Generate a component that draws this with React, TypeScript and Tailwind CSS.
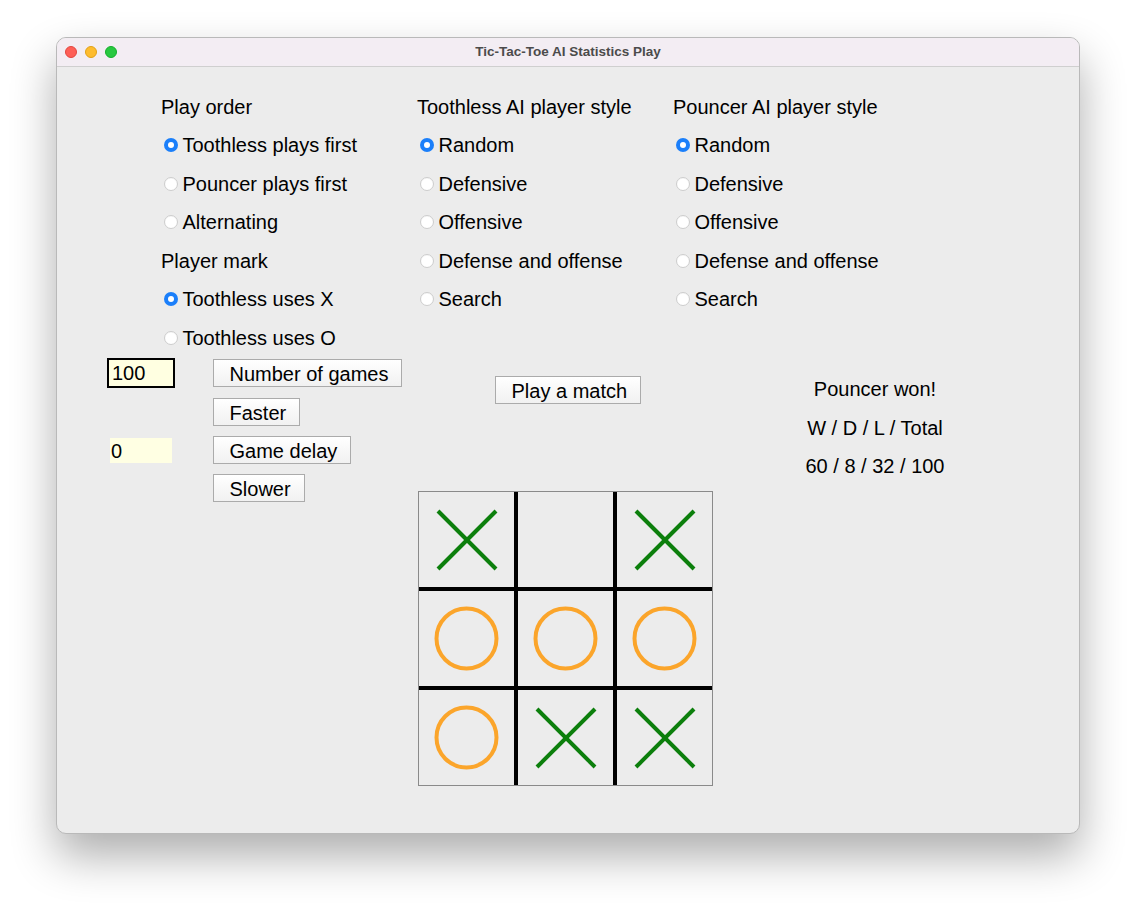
import React from "react";

const Radio = ({ checked }: { checked?: boolean }) =>
  checked ? (
    <span className="w-[14px] h-[14px] rounded-full bg-[#1b7ffa] flex items-center justify-center shrink-0">
      <span className="w-[6px] h-[6px] rounded-full bg-white" />
    </span>
  ) : (
    <span className="w-[14px] h-[14px] rounded-full bg-white border border-[#cdcdcd] shrink-0 shadow-[inset_0_0.5px_1px_rgba(0,0,0,0.06)]" />
  );

const Row = ({ children }: { children: React.ReactNode }) => (
  <div className="h-[38.5px] flex items-center">{children}</div>
);

const RadioRow = ({ label, checked }: { label: string; checked?: boolean }) => (
  <Row>
    <span className="ml-[3px] flex items-center">
      <Radio checked={checked} />
    </span>
    <span className="ml-[4.5px]">{label}</span>
  </Row>
);

const Btn = ({ label, w, className = "" }: { label: string; w: string; className?: string }) => (
  <div
    className={`h-[28px] ${w} border border-[#ababab] bg-gradient-to-b from-[#ffffff] to-[#f1f1f1] flex items-center pl-[15.5px] pt-[2px] leading-none ${className}`}
  >
    {label}
  </div>
);

const XMark = () => (
  <svg width="95" height="95" viewBox="0 0 95 95">
    <line x1="19" y1="19" x2="77" y2="77" stroke="#0c7f0c" strokeWidth="4" />
    <line x1="77" y1="19" x2="19" y2="77" stroke="#0c7f0c" strokeWidth="4" />
  </svg>
);

const OMark = () => (
  <svg width="95" height="95" viewBox="0 0 95 95">
    <circle cx="47.5" cy="47.5" r="30" fill="none" stroke="#fba52b" strokeWidth="4" />
  </svg>
);

export default function App() {
  const cells = ["X", "", "X", "O", "O", "O", "O", "X", "X"];
  const styles = ["Random", "Defensive", "Offensive", "Defense and offense", "Search"];
  return (
    <div className="w-[1136px] h-[908px] bg-white relative font-['Liberation_Sans',Arial,sans-serif] text-[20px] text-black">
      <div className="pt-[37px] pl-[56px]">
        <div className="w-[1024px] h-[797px] rounded-[10px] overflow-hidden bg-[#ececec] border border-[#b9b9b9] shadow-[0_22px_45px_rgba(0,0,0,0.32)] flex flex-col">
          {/* title bar */}
          <div className="h-[29px] bg-[#f3edf3] border-b border-[#cfcfcf] relative flex items-center justify-center shrink-0">
            <div className="absolute left-[8px] top-[8px] flex gap-[8px]">
              <span className="w-[12px] h-[12px] rounded-full bg-[#fe5f57] border border-[#e2463f]" />
              <span className="w-[12px] h-[12px] rounded-full bg-[#febc2e] border border-[#e1a116]" />
              <span className="w-[12px] h-[12px] rounded-full bg-[#28c840] border border-[#14ae2a]" />
            </div>
            <span className="text-[13.5px] font-bold text-[#4b4b4b] leading-none">Tic-Tac-Toe AI Statistics Play</span>
          </div>

          {/* body */}
          <div className="flex-1">
            {/* top section */}
            <div className="pt-[20.5px] pl-[104px] grid grid-cols-[256px_256px_256px]">
              <div className="flex flex-col">
                <Row>Play order</Row>
                <RadioRow label="Toothless plays first" checked />
                <RadioRow label="Pouncer plays first" />
                <RadioRow label="Alternating" />
                <Row>Player mark</Row>
                <RadioRow label="Toothless uses X" checked />
                <RadioRow label="Toothless uses O" />
              </div>
              <div className="flex flex-col">
                <Row>Toothless AI player style</Row>
                {styles.map((s, i) => (
                  <RadioRow key={s} label={s} checked={i === 0} />
                ))}
              </div>
              <div className="flex flex-col">
                <Row>Pouncer AI player style</Row>
                {styles.map((s, i) => (
                  <RadioRow key={s} label={s} checked={i === 0} />
                ))}
              </div>
            </div>

            {/* lower section */}
            <div className="flex items-start pl-[50px] -mt-[1px]">
              {/* left controls */}
              <div className="w-[311px] flex items-start">
                <div className="w-[106px] flex flex-col">
                  <div className="mt-[1.5px] w-[68px] h-[30px] border-2 border-black bg-[#ffffe1] flex items-center pl-[3px] pt-[1px] leading-none">
                    100
                  </div>
                  <div className="mt-[50px] ml-[3px] w-[62px] h-[25px] bg-[#ffffe3] flex items-center pl-[1px] pt-[1px] leading-none">
                    0
                  </div>
                </div>
                <div className="flex flex-col mt-[2.5px]">
                  <Btn label="Number of games" w="w-[189px]" />
                  <Btn label="Faster" w="w-[87px]" className="mt-[11px]" />
                  <Btn label="Game delay" w="w-[138px]" className="mt-[10px]" />
                  <Btn label="Slower" w="w-[92px]" className="mt-[10px]" />
                </div>
              </div>

              {/* center */}
              <div className="w-[295px] flex flex-col">
                <Btn label="Play a match" w="w-[146px]" className="ml-[77px] mt-[19.5px]" />
                <div className="mt-[87px] w-[295px] h-[295px] border border-[#8a8a8a] bg-black grid grid-cols-3 grid-rows-3 gap-[4px]">
                  {cells.map((c, i) => (
                    <div key={i} className="bg-[#ececec] flex items-center justify-center">
                      {c === "X" ? <XMark /> : c === "O" ? <OMark /> : null}
                    </div>
                  ))}
                </div>
              </div>

              {/* right stats */}
              <div className="ml-[62px] w-[200px] mt-[14px] flex flex-col items-center">
                <div className="h-[38.5px] flex items-center">Pouncer won!</div>
                <div className="h-[38.5px] flex items-center">W / D / L / Total</div>
                <div className="h-[38.5px] flex items-center">60 / 8 / 32 / 100</div>
              </div>
            </div>
          </div>
        </div>
      </div>
    </div>
  );
}
